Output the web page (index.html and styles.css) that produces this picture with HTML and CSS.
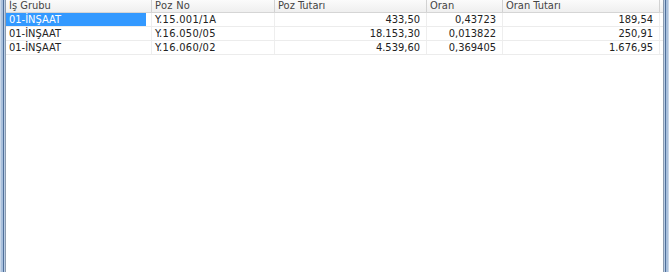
FILE: index.html
```html
<!DOCTYPE html>
<html>
<head>
<meta charset="utf-8">
<link rel="stylesheet" href="styles.css">
</head>
<body>
<div class="frame">
  <div class="frame-inner">
    <div class="grid">
      <div class="row head">
        <div class="c c1">İş Grubu</div>
        <div class="c c2">Poz No</div>
        <div class="c c3">Poz Tutarı</div>
        <div class="c c4">Oran</div>
        <div class="c c5">Oran Tutarı</div>
      </div>
      <div class="row">
        <div class="c c1"><span class="sel">01-İNŞAAT</span></div>
        <div class="c c2">Y.15.001/1A</div>
        <div class="c c3 num">433,50</div>
        <div class="c c4 num">0,43723</div>
        <div class="c c5 num">189,54</div>
      </div>
      <div class="row">
        <div class="c c1">01-İNŞAAT</div>
        <div class="c c2">Y.16.050/05</div>
        <div class="c c3 num">18.153,30</div>
        <div class="c c4 num">0,013822</div>
        <div class="c c5 num">250,91</div>
      </div>
      <div class="row">
        <div class="c c1">01-İNŞAAT</div>
        <div class="c c2">Y.16.060/02</div>
        <div class="c c3 num">4.539,60</div>
        <div class="c c4 num">0,369405</div>
        <div class="c c5 num">1.676,95</div>
      </div>
    </div>
  </div>
</div>
</body>
</html>
```

FILE: styles.css
```css
html, body {
  margin: 0;
  padding: 0;
  width: 669px;
  height: 272px;
  overflow: hidden;
  background: #fff;
}
.frame {
  box-sizing: border-box;
  width: 669px;
  height: 272px;
  border-left: 1px solid #c9d7e8;
  border-right: 1px solid #c9d7e8;
  padding: 0 2px;
  background: #a9c0dc;
}
.frame-inner {
  box-sizing: border-box;
  height: 100%;
  border-left: 1px solid #4f6f9a;
  border-right: 1px solid #4f6f9a;
  padding: 0 1px;
  background: #b9cde5;
}
.grid {
  box-sizing: border-box;
  height: 100%;
  background: #fff;
  border-left: 1px solid #8c9cb0;
  border-right: 1px solid #8c9cb0;
  font-family: Tahoma, "DejaVu Sans Condensed", "Liberation Sans", sans-serif;
  font-size: 11px;
  color: #222;
}
.row {
  display: grid;
  grid-template-columns: 146px 123px 152px 76px 157px;
  height: 14px;
  border-bottom: 1px solid #ececec;
  box-sizing: border-box;
}
.head {
  height: 13px;
  background: linear-gradient(#fbfbfb, #efefef);
  border-bottom: 1px solid #d5d5d5;
  color: #444;
}
.c {
  border-right: 1px solid #eeeeee;
  padding: 0 3px;
  line-height: 13px;
  white-space: nowrap;
  overflow: hidden;
  box-sizing: border-box;
}
.head .c {
  border-right: 1px solid #d2d2d2;
  line-height: 12px;
}
.c2 { letter-spacing: 0.3px; }
.num { text-align: right; padding-right: 6px; }
.row:not(.head) .c1 { padding-left: 3px; }
.sel {
  display: block;
  margin-left: -3px;
  padding-left: 3px;
  margin-right: 2px;
  background: #3399ff;
  color: #fff;
}
```
